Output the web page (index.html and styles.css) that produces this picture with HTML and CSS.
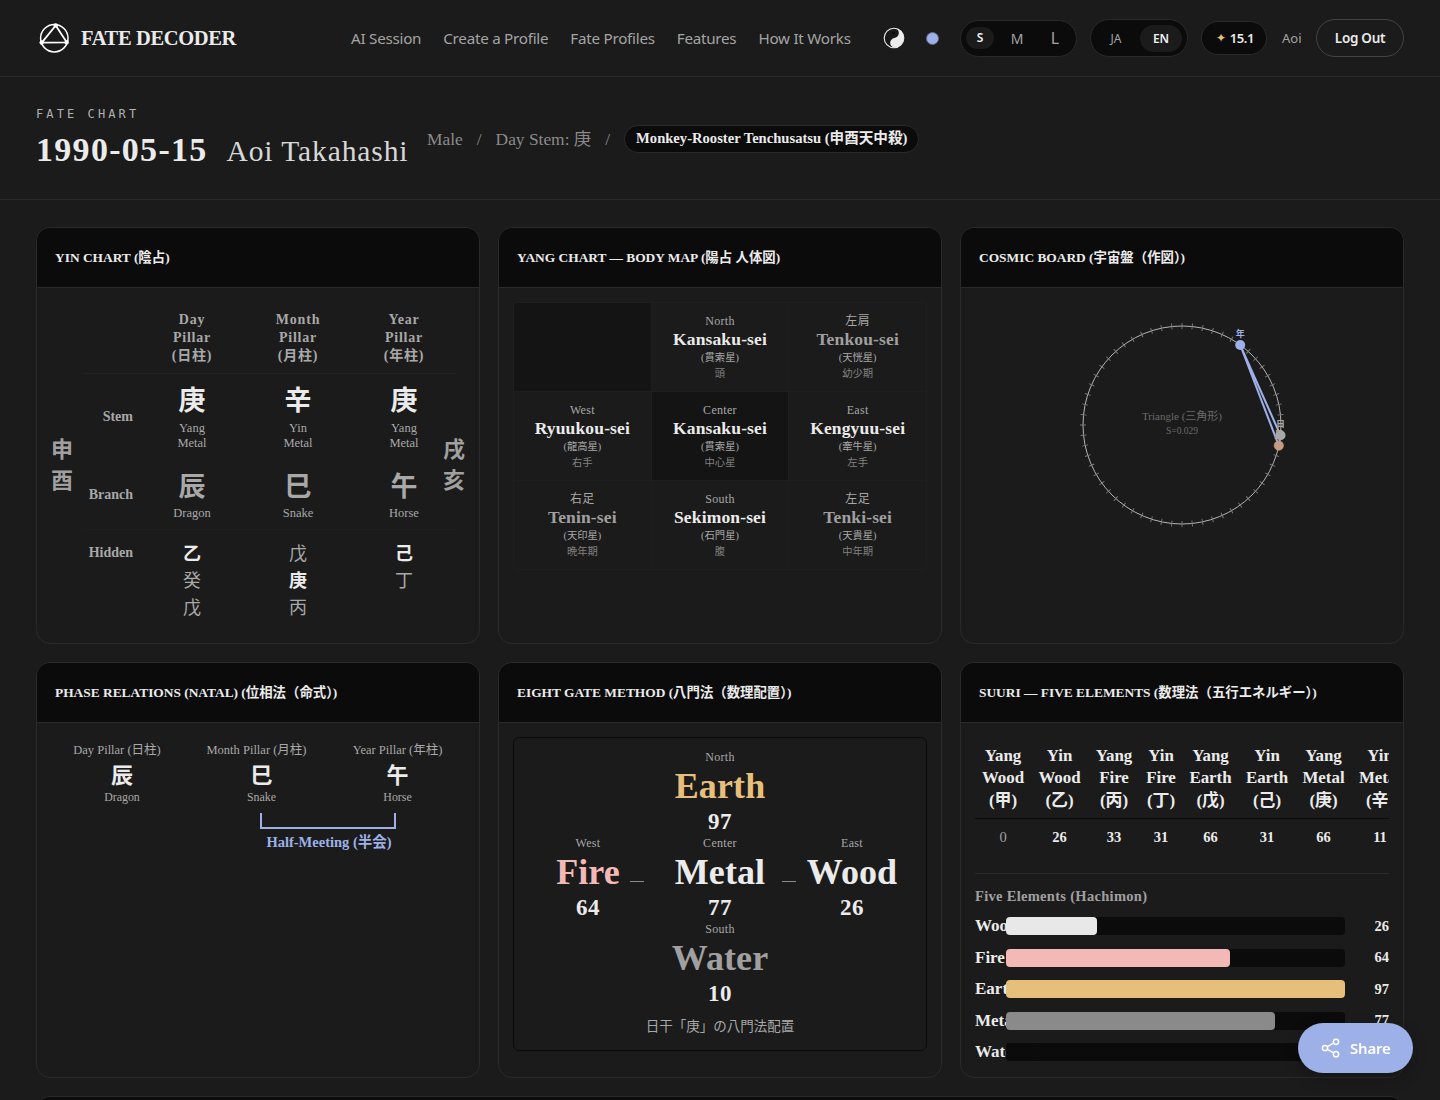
FILE: index.html
```
<!DOCTYPE html>
<html lang="en">
<head>
  <meta charset="UTF-8">
  <meta name="viewport" content="width=device-width, initial-scale=1.0">
  <title>Fate Decoder</title>
  <link rel="stylesheet" href="styles.css">
</head>
<body>
  <header class="site-header">
    <a class="brand">
      <svg width="32" height="32" viewBox="0 0 32 32" fill="none" stroke="#fff" stroke-width="1.5">
        <circle cx="16.3" cy="16.2" r="13.7"/>
        <path d="M17.7 3.5 3.8 20.6 28.8 20.3Z" stroke-width="1.8"/>
        <g fill="#fff" stroke="none">
          <circle cx="17.7" cy="3.400" r="2.200"/>
          <circle cx="3.7" cy="20.5" r="2.200"/>
          <circle cx="28.600" cy="20.3" r="2.200"/>
        </g>
      </svg>
      <span>FATE DECODER</span>
    </a>
    <nav class="nav">
      <a>AI Session</a>
      <a>Create a Profile</a>
      <a>Fate Profiles</a>
      <a>Features</a>
      <a>How It Works</a>
    </nav>
    <div class="tools">
      <svg class="yinyang" width="22" height="22" viewBox="0 0 22 22">
        <circle cx="11" cy="11" r="9.8" fill="#181818" stroke="#ececec" stroke-width="1.1"/>
        <path d="M11 20.800A9.800 9.800 0 0 0 12.500 1.300C17.200 3 17 9.800 11.500 11 6.200 12 5.500 18.500 11 20.800Z" fill="#ececec"/>
        <circle cx="10.600" cy="6.200" r="1.300" fill="#050505"/>
      </svg>
      <span class="accent-dot"></span>
      <div class="pill size-switch">
        <span class="on">S</span><span class="m">M</span><span class="l">L</span>
      </div>
      <div class="pill lang-switch">
        <span>JA</span><span class="on">EN</span>
      </div>
      <div class="pill credits"><i>✦</i> 15.1</div>
      <span class="user">Aoi</span>
      <a class="logout">Log Out</a>
    </div>
  </header>

  <section class="hero">
    <div>
      <p class="eyebrow">FATE CHART</p>
      <h1>1990-05-15 <span>Aoi Takahashi</span></h1>
    </div>
    <div class="meta">
      <span>Male</span>
      <span>/</span>
      <span>Day Stem: 庚</span>
      <span>/</span>
      <span class="tag">Monkey-Rooster Tenchusatsu (申酉天中殺)</span>
    </div>
  </section>

  <main class="cards">
    <!-- Yin chart -->
    <article class="card">
      <h2>YIN CHART (陰占)</h2>
      <div class="card-body yin">
        <div class="void">申<br>酉</div>
        <div class="pillars">
          <div class="pillar-row head">
            <div></div>
            <div>Day<br>Pillar<br>(日柱)</div>
            <div>Month<br>Pillar<br>(月柱)</div>
            <div>Year<br>Pillar<br>(年柱)</div>
          </div>
          <div class="pillar-row stem-row">
            <div class="label">Stem</div>
            <div><b>庚</b><small>Yang<br>Metal</small></div>
            <div><b>辛</b><small>Yin<br>Metal</small></div>
            <div><b>庚</b><small>Yang<br>Metal</small></div>
          </div>
          <div class="pillar-row branch-row">
            <div class="label">Branch</div>
            <div><b>辰</b><small>Dragon</small></div>
            <div><b>巳</b><small>Snake</small></div>
            <div><b>午</b><small>Horse</small></div>
          </div>
          <div class="pillar-row hidden-row">
            <div class="label">Hidden</div>
            <div><strong>乙</strong><br>癸<br>戊</div>
            <div>戊<br><strong>庚</strong><br>丙</div>
            <div><strong>己</strong><br>丁</div>
          </div>
        </div>
        <div class="void">戌<br>亥</div>
      </div>
    </article>

    <!-- Yang chart -->
    <article class="card">
      <h2>YANG CHART — BODY MAP (陽占 人体図)</h2>
      <div class="card-body">
        <div class="body-map">
          <div class="dark"></div>
          <div><span>North</span><b>Kansaku-sei</b><em>(貫索星)</em><small>頭</small></div>
          <div class="sub"><span>左肩</span><b>Tenkou-sei</b><em>(天恍星)</em><small>幼少期</small></div>
          <div><span>West</span><b>Ryuukou-sei</b><em>(龍高星)</em><small>右手</small></div>
          <div class="dark"><span>Center</span><b>Kansaku-sei</b><em>(貫索星)</em><small>中心星</small></div>
          <div><span>East</span><b>Kengyuu-sei</b><em>(牽牛星)</em><small>左手</small></div>
          <div class="sub"><span>右足</span><b>Tenin-sei</b><em>(天印星)</em><small>晩年期</small></div>
          <div><span>South</span><b>Sekimon-sei</b><em>(石門星)</em><small>腹</small></div>
          <div class="sub"><span>左足</span><b>Tenki-sei</b><em>(天貴星)</em><small>中年期</small></div>
        </div>
      </div>
    </article>

    <!-- Cosmic board -->
    <article class="card">
      <h2>COSMIC BOARD (宇宙盤（作図）)</h2>
      <div class="card-body board">
        <svg width="246" height="246" viewBox="-123 -123 246 246">
          <circle r="99" fill="none" stroke="#b4b4b4"/>
          <!-- 60 ticks, one every 6 degrees -->
          <circle r="99" fill="none" stroke="#7c7c7c" stroke-width="6" pathLength="600" stroke-dasharray="0.9 9.1" stroke-dashoffset="0.45"/>
          <path d="M58.200-80 98.500 10.300 96.800 20.600Z" fill="none" stroke="#9db1e8" stroke-width="2"/>
          <circle cx="96.800" cy="20.600" r="4.700" fill="#c49a8a" stroke="#c9955a" stroke-width=".6"/>
          <text class="pt" x="96.800" y="12.600" fill="#d89a60">月</text>
          <circle cx="98.500" cy="10.300" r="5" fill="#a8a8a8"/>
          <text class="pt" x="98.500" y="2.300" fill="#a8a8a8">日</text>
          <circle cx="58.200" cy="-80" r="5" fill="#9db1e8"/>
          <text class="pt" x="58.200" y="-88" fill="#9db1e8">年</text>
          <text class="shape" x="0" y="-5">Triangle (三角形)</text>
          <text class="area" x="0" y="9">S=0.029</text>
        </svg>
      </div>
    </article>

    <!-- Phase relations -->
    <article class="card">
      <h2>PHASE RELATIONS (NATAL) (位相法（命式）)</h2>
      <div class="card-body">
        <div class="phase">
          <div><span>Day Pillar (日柱)</span><b>辰</b><small>Dragon</small></div>
          <div><span>Month Pillar (月柱)</span><b>巳</b><small>Snake</small></div>
          <div><span>Year Pillar (年柱)</span><b>午</b><small>Horse</small></div>
          <div class="bracket"></div>
          <p>Half-Meeting (半会)</p>
        </div>
      </div>
    </article>

    <!-- Eight gates -->
    <article class="card">
      <h2>EIGHT GATE METHOD (八門法（数理配置）)</h2>
      <div class="card-body">
        <div class="gates">
          <div class="gate north earth"><span>North</span><b>Earth</b><strong>97</strong></div>
          <div class="gate fire"><span>West</span><b>Fire</b><strong>64</strong></div>
          <i></i>
          <div class="gate"><span>Center</span><b>Metal</b><strong>77</strong></div>
          <i></i>
          <div class="gate"><span>East</span><b>Wood</b><strong>26</strong></div>
          <div class="gate south water"><span>South</span><b>Water</b><strong>10</strong></div>
          <p>日干「庚」の八門法配置</p>
        </div>
      </div>
    </article>

    <!-- Five elements -->
    <article class="card">
      <h2>SUURI — FIVE ELEMENTS (数理法（五行エネルギー）)</h2>
      <div class="card-body">
        <div class="suuri">
          <div class="suuri-table">
            <div>Yang<br>Wood<br>(甲)</div>
            <div>Yin<br>Wood<br>(乙)</div>
            <div>Yang<br>Fire<br>(丙)</div>
            <div>Yin<br>Fire<br>(丁)</div>
            <div>Yang<br>Earth<br>(戊)</div>
            <div>Yin<br>Earth<br>(己)</div>
            <div>Yang<br>Metal<br>(庚)</div>
            <div>Yin<br>Metal<br>(辛)</div>
            <span class="zero">0</span>
            <span>26</span>
            <span>33</span>
            <span>31</span>
            <span>66</span>
            <span>31</span>
            <span>66</span>
            <span>11</span>
          </div>
        </div>
        <div class="bars">
          <h3>Five Elements (Hachimon)</h3>
          <div class="bar"><span>Wood</span><div><i class="c-wood" style="width: 26.8%"></i></div><em>26</em></div>
          <div class="bar"><span>Fire</span><div><i class="c-fire" style="width: 66%"></i></div><em>64</em></div>
          <div class="bar"><span>Earth</span><div><i class="c-earth" style="width: 100%"></i></div><em>97</em></div>
          <div class="bar"><span>Metal</span><div><i class="c-metal" style="width: 79.4%"></i></div><em>77</em></div>
          <div class="bar"><span>Water</span><div><i class="c-water" style="width: 10.3%"></i></div><em>10</em></div>
        </div>
      </div>
    </article>

    <article class="card wide"><h2></h2></article>
  </main>

  <a class="share">
    <svg width="20" height="20" viewBox="0 0 20 20" fill="none" stroke="#fff" stroke-width="1.5">
      <circle cx="15" cy="3.800" r="2.600"/>
      <circle cx="4" cy="10" r="2.600"/>
      <circle cx="15" cy="16.200" r="2.600"/>
      <path d="M6.300 8.700 12.700 5.100M6.300 11.300 12.700 14.900"/>
    </svg>
    <span>Share</span>
  </a>
</body>
</html>
```
FILE: styles.css
```
* { box-sizing: border-box; }
body {
  margin: 0;
  height: 1100px;
  overflow: hidden;
  background: #1b1b1b;
  color: #ebebeb;
  font-family: "Liberation Serif", "Noto Sans CJK JP", serif;
}
h1, h2, h3, p { margin: 0; }
i, em { font-style: normal; }

/* Header */
.site-header {
  display: flex;
  align-items: center;
  height: 77px;
  padding: 0 36px 0 38px;
  border-bottom: 1px solid #2a2a2a;
  font-family: "Noto Sans", "Noto Sans CJK JP", sans-serif;
}
.brand {
  display: flex;
  align-items: center;
  gap: 11px;
  width: 313px;
  font-family: "Liberation Serif", serif;
  font-size: 20.5px;
  font-weight: 700;
  letter-spacing: -0.35px;
}
.nav {
  display: flex;
  gap: 22px;
  font-size: 15.2px;
  letter-spacing: -0.25px;
  color: #a4a4a4;
  white-space: nowrap;
}
.tools {
  display: flex;
  align-items: center;
  margin-left: auto;
}
.yinyang { margin-right: 21px; }
.accent-dot {
  width: 13px;
  height: 13px;
  margin-right: 21px;
  border-radius: 50%;
  background: #9db1e8;
  border: 1px solid #5f6a8a;
}
.pill {
  display: flex;
  align-items: center;
  background: #0b0b0b;
  border: 1px solid #2a2a2a;
  border-radius: 20px;
}
.pill span { text-align: center; color: #a4a4a4; }
.pill .on {
  background: #1b1b1b;
  color: #f0f0f0;
  font-weight: 600;
}
.size-switch {
  width: 117px;
  height: 37px;
  padding-left: 5px;
  margin-right: 13px;
  font-size: 12px;
}
.size-switch .on { width: 28px; line-height: 22px; border-radius: 11px; }
.size-switch .m { width: 46px; font-size: 14px; }
.size-switch .l { width: 30px; font-size: 16px; }
.lang-switch {
  width: 98px;
  height: 38px;
  padding-left: 4px;
  margin-right: 13px;
  font-size: 12px;
}
.lang-switch span { width: 42px; line-height: 27px; border-radius: 14px; }
.lang-switch .on { margin-left: 3px; }
.credits {
  width: 66px;
  height: 34px;
  justify-content: center;
  gap: 4px;
  margin-right: 15px;
  padding-left: 2px;
  font-size: 13px;
  font-weight: 600;
  letter-spacing: -0.4px;
}
.credits i { color: #e6c07b; font-family: "DejaVu Sans", sans-serif; font-size: 12px; }
.user { width: 20px; margin-right: 14px; font-size: 13px; color: #a4a4a4; }
.logout {
  width: 88px;
  height: 38px;
  border: 1px solid #444;
  border-radius: 19px;
  font-size: 13.5px;
  font-weight: 600;
  line-height: 37px;
  text-align: center;
  letter-spacing: -0.3px;
}

/* Title strip */
.hero {
  display: flex;
  align-items: center;
  height: 123px;
  padding: 0 36px;
  border-bottom: 1px solid #2a2a2a;
}
.eyebrow {
  padding-top: 8px;
  font-family: "DejaVu Sans Mono", monospace;
  font-size: 12px;
  line-height: 16px;
  letter-spacing: 3.1px;
  color: #b0b0b0;
}
.hero h1 {
  font-size: 34px;
  line-height: 56px;
  letter-spacing: 1.3px;
  width: 372px;
  white-space: nowrap;
}
.hero h1 span {
  margin-left: 9px;
  font-size: 29.5px;
  font-weight: 400;
  letter-spacing: 0.9px;
  color: #d8d8d8;
}
.meta {
  display: flex;
  align-items: center;
  gap: 14px;
  margin-left: 19px;
  padding-top: 1px;
  font-size: 17.4px;
  line-height: 26px;
  color: #8a8a8a;
}
.meta span { height: 26px; white-space: nowrap; }
.meta .tag {
  height: 28px;
  padding: 0 11px;
  border: 1px solid #2a2a2a;
  border-radius: 14px;
  background: #0b0b0b;
  color: #ebebeb;
  font-size: 14.6px;
  font-weight: 700;
  line-height: 25px;
}

/* Cards */
.cards {
  display: grid;
  grid-template-columns: repeat(3, 1fr);
  grid-template-rows: 417px 416px 120px;
  gap: 18px;
  height: 900px;
  padding: 27px 36px 0;
  overflow: hidden;
}
.card {
  border: 1px solid #2a2a2a;
  border-radius: 14px;
  overflow: hidden;
}
.card h2 {
  height: 60px;
  padding-left: 18px;
  border-bottom: 1px solid #2a2a2a;
  background: #0b0b0b;
  font-size: 13.4px;
  line-height: 59px;
  white-space: nowrap;
}
.card-body { padding: 14px; }
.wide { grid-column: 1 / -1; }

/* Yin chart */
.yin {
  display: flex;
  align-items: center;
  gap: 10px;
}
.void {
  width: 22px;
  margin-top: -2px;
  font-size: 22px;
  font-weight: 700;
  line-height: 31px;
  color: #a0a0a0;
}
.pillars { flex: 1; min-width: 0; }
.pillar-row {
  display: grid;
  grid-template-columns: 56px repeat(3, 106px);
  width: 374px;
  text-align: center;
  color: #a8a8a8;
}
.pillar-row b {
  display: block;
  font-size: 27px;
  line-height: 40px;
}
.pillar-row small {
  display: block;
  font-size: 12.5px;
  line-height: 15px;
}
.head {
  height: 72px;
  padding-top: 9px;
  border-bottom: 1px solid #222;
  font-size: 14px;
  font-weight: 700;
  line-height: 18px;
  letter-spacing: 0.8px;
}
.label {
  align-self: center;
  padding-right: 6px;
  font-size: 14px;
  font-weight: 700;
  text-align: right;
}
.stem-row { height: 85px; padding-top: 7px; }
.stem-row b { color: #ebebeb; }
.stem-row .label, .branch-row .label { padding-bottom: 7px; }
.branch-row {
  height: 71px;
  padding-top: 8px;
  border-bottom: 1px solid #1e1e1e;
}
.branch-row small { margin-top: -1px; }
.hidden-row {
  height: 99px;
  padding-top: 11px;
  font-size: 18px;
  line-height: 27px;
}
.hidden-row .label { align-self: start; margin-top: -2px; }
.hidden-row strong { color: #ebebeb; }

/* Yang chart */
.body-map {
  display: grid;
  grid-template-columns: repeat(3, 1fr);
  grid-auto-rows: 88px;
  gap: 1px;
  border: 1px solid #1f1f1f;
  border-radius: 4px;
  background: #1e1e1e;
  overflow: hidden;
}
.body-map div {
  padding-top: 10px;
  background: #1b1b1b;
  text-align: center;
}
.body-map .dark { background: #141414; }
.body-map div > * { display: block; }
.body-map span { font-size: 12px; line-height: 16px; letter-spacing: 0.3px; color: #a8a8a8; }
.body-map b { font-size: 17.5px; line-height: 21px; letter-spacing: 0.15px; }
.body-map .sub b { color: #a0a0a0; }
.body-map em { font-size: 10.3px; line-height: 15px; color: #a8a8a8; }
.body-map small { font-size: 10.3px; line-height: 17px; color: #808080; }

/* Cosmic board */
.board { display: flex; justify-content: center; }
.board text { text-anchor: middle; }
.pt { font-size: 9px; font-weight: 700; }
.shape { font-size: 11px; fill: #6a6a6a; }
.area { font-size: 9.5px; fill: #6a6a6a; }

/* Phase relations */
.phase {
  display: grid;
  grid-template-columns: 142px 137px 135px;
  text-align: center;
}
.phase div > * { display: block; }
.phase span {
  margin-right: 10px;
  font-size: 12.5px;
  line-height: 26px;
  color: #a8a8a8;
  white-space: nowrap;
}
.phase div:nth-child(3) span { margin-right: 0; }
.phase b { font-size: 22px; line-height: 25px; }
.phase small { font-size: 11.9px; line-height: 18px; color: #a8a8a8; }
.phase .bracket {
  grid-column: 2 / 4;
  height: 16px;
  margin: 7px 69px 0 67px;
  border: 2px solid #9db1e8;
  border-top: 0;
}
.phase p {
  grid-column: 2 / 4;
  font-size: 14.5px;
  font-weight: 700;
  line-height: 27px;
  color: #9db1e8;
}

/* Eight gates */
.gates {
  display: grid;
  grid-template-columns: 84px 28px 124px 28px 84px;
  grid-template-rows: 86px 86px 86px 37px;
  justify-content: center;
  height: 314px;
  padding-top: 12px;
  border: 1px solid #0b0b0b;
  border-radius: 6px;
}
.gate {
  display: flex;
  flex-direction: column;
  align-items: center;
}
.gate span { font-size: 12px; line-height: 15px; letter-spacing: 0.3px; color: #a8a8a8; }
.gate b { font-size: 36px; line-height: 42px; letter-spacing: 0.1px; }
.gate strong { font-size: 23px; line-height: 29px; letter-spacing: 0.5px; }
.gates i {
  width: 14px;
  height: 1px;
  margin-top: 45px;
  background: #8a8a8a;
}
.north, .south, .gates p { grid-column: 1 / -1; }
.gates p {
  font-size: 13.5px;
  line-height: 38px;
  text-align: center;
  color: #a8a8a8;
}
.earth b { color: #e6c07b; }
.fire b { color: #f3b9b7; }
.water b { color: #a0a0a0; }

/* Five elements */
.suuri { overflow: hidden; }
.suuri-table {
  display: grid;
  grid-template-columns: 56px 57px 52px 42px 57px 56px 57px 56px;
  text-align: center;
  font-weight: 700;
}
.suuri-table div {
  height: 82px;
  padding-top: 7.5px;
  border-bottom: 1px solid #0b0b0b;
  font-size: 16.9px;
  line-height: 22.5px;
}
.suuri-table span { height: 54px; font-size: 14.5px; line-height: 36px; }
.suuri-table .zero { font-weight: 400; color: #a0a0a0; }
.bars { border-top: 1px solid #2a2a2a; }
.bars h3 {
  padding-top: 8px;
  margin-bottom: 7px;
  font-size: 14.5px;
  line-height: 28px;
  letter-spacing: 0.3px;
  color: #a0a0a0;
}
.bar {
  display: flex;
  align-items: center;
  height: 18px;
  margin-bottom: 13.5px;
}
.bar span { width: 31px; font-size: 17px; font-weight: 700; }
.bar div {
  position: relative;
  width: 339px;
  height: 18px;
  border-radius: 4px;
  background: #0b0b0b;
}
.bar i { display: block; height: 18px; border-radius: 4px; }
.bar em { flex: 1; font-size: 14.5px; font-weight: 700; text-align: right; }
.c-wood { background: #e8e8e8; }
.c-fire { background: #f3b9b7; }
.c-earth { background: #e6c07b; }
.c-metal { background: #8a8a8a; }
.c-water { background: #0b0b0b; }

.share {
  position: fixed;
  right: 27px;
  bottom: 27px;
  display: flex;
  align-items: center;
  gap: 9px;
  width: 115px;
  height: 50px;
  padding-left: 23px;
  border-radius: 25px;
  background: #9db1e8;
  box-shadow: 0 6px 16px rgba(0, 0, 0, 0.2);
  color: #fff;
  font-family: "Noto Sans", sans-serif;
  font-size: 15px;
  font-weight: 600;
  letter-spacing: -0.2px;
}
```
